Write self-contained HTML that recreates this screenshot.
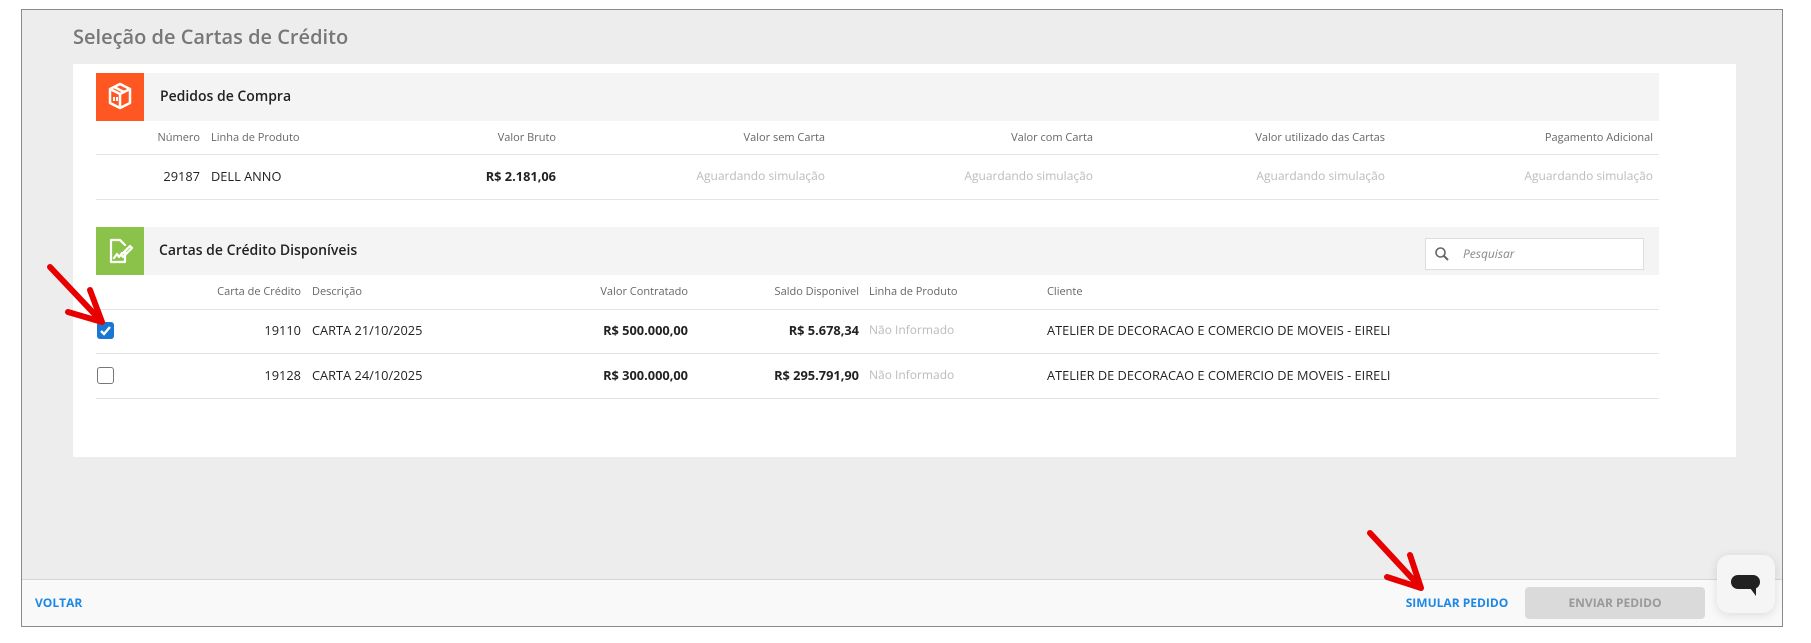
<!DOCTYPE html>
<html><head><meta charset="utf-8"><style>
*{margin:0;padding:0;box-sizing:border-box}
body{width:1811px;height:643px;background:#fff;position:relative;overflow:hidden;font-family:"Open Sans","Liberation Sans",sans-serif;color:#222}
.a{position:absolute;white-space:nowrap}
.frame{position:absolute;left:21px;top:9px;width:1762px;height:618px;border:1px solid #8a8a8a;background:#ededed}
.hl{color:#666;font-size:11px;line-height:14px}
.d{font-size:12.8px;line-height:16px;color:#222}
.g{font-size:12px;line-height:16px;color:#bbb}
.b{font-weight:bold;font-size:12.8px}
.line{position:absolute;height:1px;background:#e3e3e3}
.r{text-align:right}
</style></head><body>
<div class="frame"></div>
<div class="a" style="left:73px;top:25px;font-size:20px;color:#777;line-height:24px;font-weight:600">Seleção de Cartas de Crédito</div>
<div class="a" style="left:73px;top:64px;width:1663px;height:393px;background:#fff"></div>

<div class="a" style="left:96px;top:73px;width:1563px;height:48px;background:#f4f4f4"></div>
<div class="a" style="left:96px;top:73px;width:48px;height:48px;background:#ff5722">
<svg width="48" height="48" viewBox="0 0 48 48"><g fill="none" stroke="#fff" stroke-width="2.5" stroke-linejoin="round"><path d="M14 16 L24 11 L34 16 L34 30 L24 35 L14 30 Z"/><path d="M14 16 L24 21 L34 16 M24 21 L24 35"/><path d="M18 14 L28 19"/></g><path d="M17 24h2v4h-2zM20 24h2v4h-2z" fill="#fff"/></svg></div>
<div class="a" style="left:160px;top:88px;font-size:14px;color:#222;font-weight:600;line-height:18px">Pedidos de Compra</div>

<div class="a hl r" style="left:140px;width:60px;top:131px">Número</div>
<div class="a hl" style="left:211px;top:131px">Linha de Produto</div>
<div class="a hl r" style="left:456px;width:100px;top:131px">Valor Bruto</div>
<div class="a hl r" style="left:725px;width:100px;top:131px">Valor sem Carta</div>
<div class="a hl r" style="left:993px;width:100px;top:131px">Valor com Carta</div>
<div class="a hl r" style="left:1235px;width:150px;top:131px">Valor utilizado das Cartas</div>
<div class="a hl r" style="left:1503px;width:150px;top:131px">Pagamento Adicional</div>
<div class="line" style="left:96px;top:154px;width:1563px"></div>
<div class="a d r" style="left:140px;width:60px;top:168px">29187</div>
<div class="a d" style="left:211px;top:168px">DELL ANNO</div>
<div class="a d r b" style="left:436px;width:120px;top:168px">R$ 2.181,06</div>
<div class="a g r" style="left:675px;width:150px;top:168px">Aguardando simulação</div>
<div class="a g r" style="left:943px;width:150px;top:168px">Aguardando simulação</div>
<div class="a g r" style="left:1235px;width:150px;top:168px">Aguardando simulação</div>
<div class="a g r" style="left:1503px;width:150px;top:168px">Aguardando simulação</div>
<div class="line" style="left:96px;top:199px;width:1563px"></div>

<div class="a" style="left:96px;top:227px;width:1563px;height:48px;background:#f4f4f4"></div>
<div class="a" style="left:96px;top:227px;width:48px;height:48px;background:#8bc34a">
<svg width="48" height="48" viewBox="0 0 48 48"><g fill="none" stroke="#fff" stroke-width="2.2" stroke-linejoin="round" stroke-linecap="round"><path d="M29 24 L29 35 L15 35 L15 13 L24 13 L29 18"/><path d="M18 31 L21 27 L23 30 L26 26"/><path d="M25 28 L34 19 L36 21 L27 30 Z"/></g></svg></div>
<div class="a" style="left:159px;top:242px;font-size:14px;color:#222;font-weight:600;line-height:18px">Cartas de Crédito Disponíveis</div>
<div class="a" style="left:1425px;top:238px;width:219px;height:32px;background:#fff;border:1px solid #ddd"></div>
<svg class="a" style="left:1434px;top:246px" width="16" height="16" viewBox="0 0 16 16"><circle cx="6.5" cy="6.5" r="4.5" fill="none" stroke="#666" stroke-width="1.6"/><path d="M10 10 L14 14" stroke="#666" stroke-width="2"/></svg>
<div class="a" style="left:1463px;top:246px;font-size:12px;font-style:italic;color:#888;line-height:16px">Pesquisar</div>

<div class="a hl r" style="left:200px;width:101px;top:285px">Carta de Crédito</div>
<div class="a hl" style="left:312px;top:285px">Descrição</div>
<div class="a hl r" style="left:568px;width:120px;top:285px">Valor Contratado</div>
<div class="a hl r" style="left:739px;width:120px;top:285px">Saldo Disponivel</div>
<div class="a hl" style="left:869px;top:285px">Linha de Produto</div>
<div class="a hl" style="left:1047px;top:285px">Cliente</div>
<div class="line" style="left:96px;top:309px;width:1563px"></div>

<div class="a" style="left:97px;top:322px;width:17px;height:17px;border-radius:3px;background:#1976d2">
<svg width="17" height="17" viewBox="0 0 17 17"><path d="M4 9 L7 12 L13 5" fill="none" stroke="#fff" stroke-width="2.4"/></svg></div>
<div class="a d r" style="left:230px;width:71px;top:322px">19110</div>
<div class="a d" style="left:312px;top:322px">CARTA 21/10/2025</div>
<div class="a d r b" style="left:548px;width:140px;top:322px">R$ 500.000,00</div>
<div class="a d r b" style="left:719px;width:140px;top:322px">R$ 5.678,34</div>
<div class="a g" style="left:869px;top:322px">Não Informado</div>
<div class="a d" style="left:1047px;top:322px">ATELIER DE DECORACAO E COMERCIO DE MOVEIS - EIRELI</div>
<div class="line" style="left:96px;top:353px;width:1563px"></div>

<div class="a" style="left:97px;top:367px;width:17px;height:17px;border-radius:3px;border:1.5px solid #777;background:#fff"></div>
<div class="a d r" style="left:230px;width:71px;top:367px">19128</div>
<div class="a d" style="left:312px;top:367px">CARTA 24/10/2025</div>
<div class="a d r b" style="left:548px;width:140px;top:367px">R$ 300.000,00</div>
<div class="a d r b" style="left:719px;width:140px;top:367px">R$ 295.791,90</div>
<div class="a g" style="left:869px;top:367px">Não Informado</div>
<div class="a d" style="left:1047px;top:367px">ATELIER DE DECORACAO E COMERCIO DE MOVEIS - EIRELI</div>
<div class="line" style="left:96px;top:398px;width:1563px"></div>

<div class="a" style="left:22px;top:579px;width:1760px;height:47px;background:#f9f9f9;border-top:1px solid #d6d6d6"></div>
<div class="a" style="left:35px;top:595px;font-size:12px;font-weight:bold;color:#1e88e5;line-height:16px">VOLTAR</div>
<div class="a" style="left:1403px;top:595px;font-size:12px;font-weight:bold;color:#1e88e5;line-height:16px;width:108px;text-align:center">SIMULAR PEDIDO</div>
<div class="a" style="left:1525px;top:587px;width:180px;height:32px;border-radius:4px;background:#dadada;color:#9a9a9a;font-size:12px;font-weight:bold;line-height:32px;text-align:center">ENVIAR PEDIDO</div>
<div class="a" style="left:1717px;top:555px;width:58px;height:58px;border-radius:12px;background:#f5f5f5;box-shadow:0 2px 10px rgba(0,0,0,0.12)">
<svg width="58" height="58" viewBox="0 0 58 58"><rect x="14" y="20" width="29" height="14" rx="7" fill="#222"/><path d="M33 33 L39 33 L39 41 Z" fill="#222"/></svg></div>

<svg class="a" style="left:0;top:0" width="1811" height="643"><g stroke="#e80000" stroke-width="6" stroke-linecap="round" stroke-linejoin="round" fill="none"><path d="M50 267 L102 322 M68 312 L102 322 L90 290"/><path d="M1370 533 L1421 588 M1387 577 L1421 588 L1410 555"/></g></svg>
</body></html>
